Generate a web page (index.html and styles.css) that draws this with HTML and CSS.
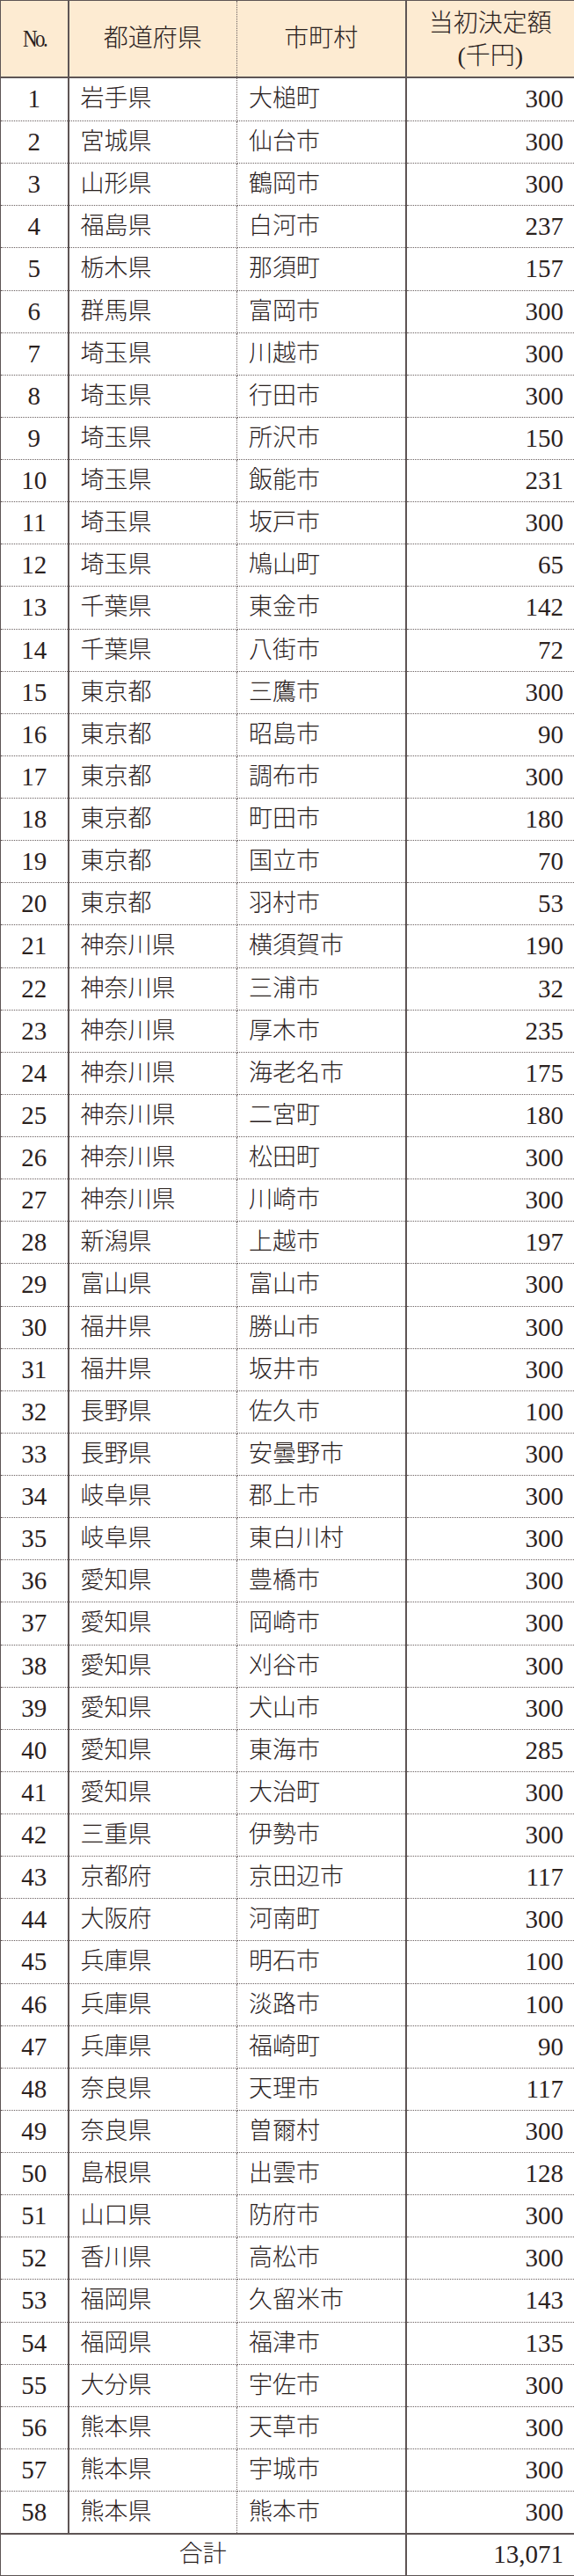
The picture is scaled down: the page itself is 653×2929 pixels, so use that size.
FILE: index.html
```html
<!DOCTYPE html>
<html lang="ja">
<head>
<meta charset="utf-8">
<title>当初決定額一覧</title>
<link rel="stylesheet" href="styles.css">
</head>
<body>
<table class="grant-table">
  <colgroup>
    <col class="c-no">
    <col class="c-pref">
    <col class="c-city">
    <col class="c-amt">
  </colgroup>
  <thead>
    <tr class="head-row">
      <th class="no"><span class="no-mark">No.</span></th>
      <th class="pref">都道府県</th>
      <th class="city">市町村</th>
      <th class="amt">当初決定額<br><span class="unit">(千円)</span></th>
    </tr>
  </thead>
  <tbody>
    <tr class="first"><td class="no">1</td><td class="pref">岩手県</td><td class="city">大槌町</td><td class="amt">300</td></tr>
    <tr><td class="no">2</td><td class="pref">宮城県</td><td class="city">仙台市</td><td class="amt">300</td></tr>
    <tr><td class="no">3</td><td class="pref">山形県</td><td class="city">鶴岡市</td><td class="amt">300</td></tr>
    <tr><td class="no">4</td><td class="pref">福島県</td><td class="city">白河市</td><td class="amt">237</td></tr>
    <tr><td class="no">5</td><td class="pref">栃木県</td><td class="city">那須町</td><td class="amt">157</td></tr>
    <tr><td class="no">6</td><td class="pref">群馬県</td><td class="city">富岡市</td><td class="amt">300</td></tr>
    <tr><td class="no">7</td><td class="pref">埼玉県</td><td class="city">川越市</td><td class="amt">300</td></tr>
    <tr><td class="no">8</td><td class="pref">埼玉県</td><td class="city">行田市</td><td class="amt">300</td></tr>
    <tr><td class="no">9</td><td class="pref">埼玉県</td><td class="city">所沢市</td><td class="amt">150</td></tr>
    <tr><td class="no">10</td><td class="pref">埼玉県</td><td class="city">飯能市</td><td class="amt">231</td></tr>
    <tr><td class="no">11</td><td class="pref">埼玉県</td><td class="city">坂戸市</td><td class="amt">300</td></tr>
    <tr><td class="no">12</td><td class="pref">埼玉県</td><td class="city">鳩山町</td><td class="amt">65</td></tr>
    <tr><td class="no">13</td><td class="pref">千葉県</td><td class="city">東金市</td><td class="amt">142</td></tr>
    <tr><td class="no">14</td><td class="pref">千葉県</td><td class="city">八街市</td><td class="amt">72</td></tr>
    <tr><td class="no">15</td><td class="pref">東京都</td><td class="city">三鷹市</td><td class="amt">300</td></tr>
    <tr><td class="no">16</td><td class="pref">東京都</td><td class="city">昭島市</td><td class="amt">90</td></tr>
    <tr><td class="no">17</td><td class="pref">東京都</td><td class="city">調布市</td><td class="amt">300</td></tr>
    <tr><td class="no">18</td><td class="pref">東京都</td><td class="city">町田市</td><td class="amt">180</td></tr>
    <tr><td class="no">19</td><td class="pref">東京都</td><td class="city">国立市</td><td class="amt">70</td></tr>
    <tr><td class="no">20</td><td class="pref">東京都</td><td class="city">羽村市</td><td class="amt">53</td></tr>
    <tr><td class="no">21</td><td class="pref">神奈川県</td><td class="city">横須賀市</td><td class="amt">190</td></tr>
    <tr><td class="no">22</td><td class="pref">神奈川県</td><td class="city">三浦市</td><td class="amt">32</td></tr>
    <tr><td class="no">23</td><td class="pref">神奈川県</td><td class="city">厚木市</td><td class="amt">235</td></tr>
    <tr><td class="no">24</td><td class="pref">神奈川県</td><td class="city">海老名市</td><td class="amt">175</td></tr>
    <tr><td class="no">25</td><td class="pref">神奈川県</td><td class="city">二宮町</td><td class="amt">180</td></tr>
    <tr><td class="no">26</td><td class="pref">神奈川県</td><td class="city">松田町</td><td class="amt">300</td></tr>
    <tr><td class="no">27</td><td class="pref">神奈川県</td><td class="city">川崎市</td><td class="amt">300</td></tr>
    <tr><td class="no">28</td><td class="pref">新潟県</td><td class="city">上越市</td><td class="amt">197</td></tr>
    <tr><td class="no">29</td><td class="pref">富山県</td><td class="city">富山市</td><td class="amt">300</td></tr>
    <tr><td class="no">30</td><td class="pref">福井県</td><td class="city">勝山市</td><td class="amt">300</td></tr>
    <tr><td class="no">31</td><td class="pref">福井県</td><td class="city">坂井市</td><td class="amt">300</td></tr>
    <tr><td class="no">32</td><td class="pref">長野県</td><td class="city">佐久市</td><td class="amt">100</td></tr>
    <tr><td class="no">33</td><td class="pref">長野県</td><td class="city">安曇野市</td><td class="amt">300</td></tr>
    <tr><td class="no">34</td><td class="pref">岐阜県</td><td class="city">郡上市</td><td class="amt">300</td></tr>
    <tr><td class="no">35</td><td class="pref">岐阜県</td><td class="city">東白川村</td><td class="amt">300</td></tr>
    <tr><td class="no">36</td><td class="pref">愛知県</td><td class="city">豊橋市</td><td class="amt">300</td></tr>
    <tr><td class="no">37</td><td class="pref">愛知県</td><td class="city">岡崎市</td><td class="amt">300</td></tr>
    <tr><td class="no">38</td><td class="pref">愛知県</td><td class="city">刈谷市</td><td class="amt">300</td></tr>
    <tr><td class="no">39</td><td class="pref">愛知県</td><td class="city">犬山市</td><td class="amt">300</td></tr>
    <tr><td class="no">40</td><td class="pref">愛知県</td><td class="city">東海市</td><td class="amt">285</td></tr>
    <tr><td class="no">41</td><td class="pref">愛知県</td><td class="city">大治町</td><td class="amt">300</td></tr>
    <tr><td class="no">42</td><td class="pref">三重県</td><td class="city">伊勢市</td><td class="amt">300</td></tr>
    <tr><td class="no">43</td><td class="pref">京都府</td><td class="city">京田辺市</td><td class="amt">117</td></tr>
    <tr><td class="no">44</td><td class="pref">大阪府</td><td class="city">河南町</td><td class="amt">300</td></tr>
    <tr><td class="no">45</td><td class="pref">兵庫県</td><td class="city">明石市</td><td class="amt">100</td></tr>
    <tr><td class="no">46</td><td class="pref">兵庫県</td><td class="city">淡路市</td><td class="amt">100</td></tr>
    <tr><td class="no">47</td><td class="pref">兵庫県</td><td class="city">福崎町</td><td class="amt">90</td></tr>
    <tr><td class="no">48</td><td class="pref">奈良県</td><td class="city">天理市</td><td class="amt">117</td></tr>
    <tr><td class="no">49</td><td class="pref">奈良県</td><td class="city">曽爾村</td><td class="amt">300</td></tr>
    <tr><td class="no">50</td><td class="pref">島根県</td><td class="city">出雲市</td><td class="amt">128</td></tr>
    <tr><td class="no">51</td><td class="pref">山口県</td><td class="city">防府市</td><td class="amt">300</td></tr>
    <tr><td class="no">52</td><td class="pref">香川県</td><td class="city">高松市</td><td class="amt">300</td></tr>
    <tr><td class="no">53</td><td class="pref">福岡県</td><td class="city">久留米市</td><td class="amt">143</td></tr>
    <tr><td class="no">54</td><td class="pref">福岡県</td><td class="city">福津市</td><td class="amt">135</td></tr>
    <tr><td class="no">55</td><td class="pref">大分県</td><td class="city">宇佐市</td><td class="amt">300</td></tr>
    <tr><td class="no">56</td><td class="pref">熊本県</td><td class="city">天草市</td><td class="amt">300</td></tr>
    <tr><td class="no">57</td><td class="pref">熊本県</td><td class="city">宇城市</td><td class="amt">300</td></tr>
    <tr><td class="no">58</td><td class="pref">熊本県</td><td class="city">熊本市</td><td class="amt">300</td></tr>
  </tbody>
  <tfoot>
    <tr class="total-row">
      <td class="total-label" colspan="3">合計</td>
      <td class="amt">13,071</td>
    </tr>
  </tfoot>
</table>
</body>
</html>
```

FILE: styles.css
```css
html, body {
  margin: 0;
  padding: 0;
  background: #ffffff;
}

.grant-table {
  width: 653px;
  border-collapse: collapse;
  table-layout: fixed;
  font-family: "Liberation Serif", "Noto Sans CJK JP", serif;
  font-size: 27px;
  font-weight: 300;
  color: #2a211e;
  border: 1px solid #5e5555;
}

.c-no { width: 77px; }
.c-pref { width: 192px; }
.c-city { width: 192px; }
.c-amt { width: 192px; }

.grant-table th,
.grant-table td {
  padding: 0;
  line-height: 1;
  vertical-align: middle;
  white-space: nowrap;
}

.grant-table th {
  font-weight: 300;
  background: #fdebd2;
  text-align: center;
  border-bottom: 2px solid #5e5555;
  font-size: 28px;
}

.head-row { height: 87px; }

.grant-table th.amt {
  line-height: 37px;
  padding-top: 2px;
}

.no-mark {
  display: inline-block;
  letter-spacing: -3px;
  transform: scaleX(0.82);
  font-size: 28px;
}

.unit {
  display: inline-block;
}

tbody tr { height: 48.14px; }
tbody tr.first { height: 50px; }

tbody td {
  border-bottom: 1px dotted #6a6060;
}

.grant-table .no {
  text-align: center;
  border-right: 2px solid #5e5555;
}

.grant-table td.no,
.grant-table td.amt {
  font-size: 29px;
}

.grant-table td.pref {
  text-align: left;
  padding-left: 13px;
  border-right: 1px dotted #6a6060;
}

.grant-table th.pref {
  border-right: 1px dotted #6a6060;
}

.grant-table td.city {
  text-align: left;
  padding-left: 13px;
}

.grant-table .city {
  border-right: 2px solid #5e5555;
}

.grant-table td.amt {
  text-align: right;
  padding-right: 12px;
}

.total-row { height: 48px; }

.total-row td {
  border-top: 2px solid #5e5555;
}

.total-label {
  text-align: center;
  border-right: 2px solid #5e5555;
}
```
